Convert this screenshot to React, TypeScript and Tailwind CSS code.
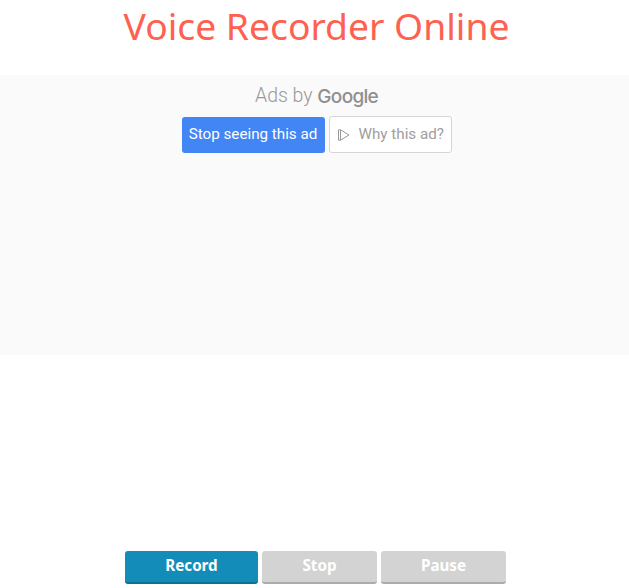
export default function App() {
  return (
    <div className="w-[629px] h-[588px] overflow-hidden bg-white flex flex-col font-['Open_Sans','Noto_Sans',sans-serif]">
      <h1 className="h-[75px] pt-[1px] pl-[4px] text-center text-[37.25px] leading-[50px] font-normal text-[#ff6150] font-['Noto_Sans',sans-serif]">Voice Recorder Online</h1>
      <div className="h-[280px] bg-[#fafafa] flex flex-col items-center pt-[7px] pl-[4px] font-['Roboto',sans-serif]">
        <div className="h-[28px] flex items-center text-[19.5px] text-[#999999] leading-none font-light">
          <span>Ads by&nbsp;</span><span className="font-medium text-[19px] font-['Inter',sans-serif] tracking-[-0.7px] text-[#8f8f8f]">Google</span>
        </div>
        <div className="flex gap-1 mt-[6px] items-center">
          <div className="w-[143px] h-[36px] rounded-[3px] bg-[#4285f4] text-white text-[15.2px] flex items-center justify-center">Stop seeing this ad</div>
          <div className="w-[123px] h-[37px] rounded-[3px] border border-[#d6d6d6] bg-white text-[#9e9e9e] text-[15.2px] flex items-center pl-[8px]">
            <svg width="12" height="12" viewBox="0 0 12 12" fill="none" stroke="#999" strokeWidth="1" className="mr-[9px]">
              <path d="M0.5 0.8 H2.5 L11 6 L2.5 11.2 H0.5 Z" />
              <path d="M2.5 0.8 V11.2" />
            </svg>
            <span>Why this ad?</span>
          </div>
        </div>
      </div>
      <div className="flex gap-1 mt-[196px] ml-[125px] text-white text-[15.2px] font-bold font-['Noto_Sans',sans-serif]">
        <div className="w-[133px] h-[33px] pb-[3px] rounded-[3px] bg-[#148cb9] border-b-2 border-[#0f7191] flex items-center justify-center">Record</div>
        <div className="w-[115px] h-[33px] pb-[3px] rounded-[3px] bg-[#d3d3d3] border-b-2 border-[#ababab] flex items-center justify-center">Stop</div>
        <div className="w-[125px] h-[33px] pb-[3px] rounded-[3px] bg-[#d3d3d3] border-b-2 border-[#ababab] flex items-center justify-center">Pause</div>
      </div>
    </div>
  );
}
